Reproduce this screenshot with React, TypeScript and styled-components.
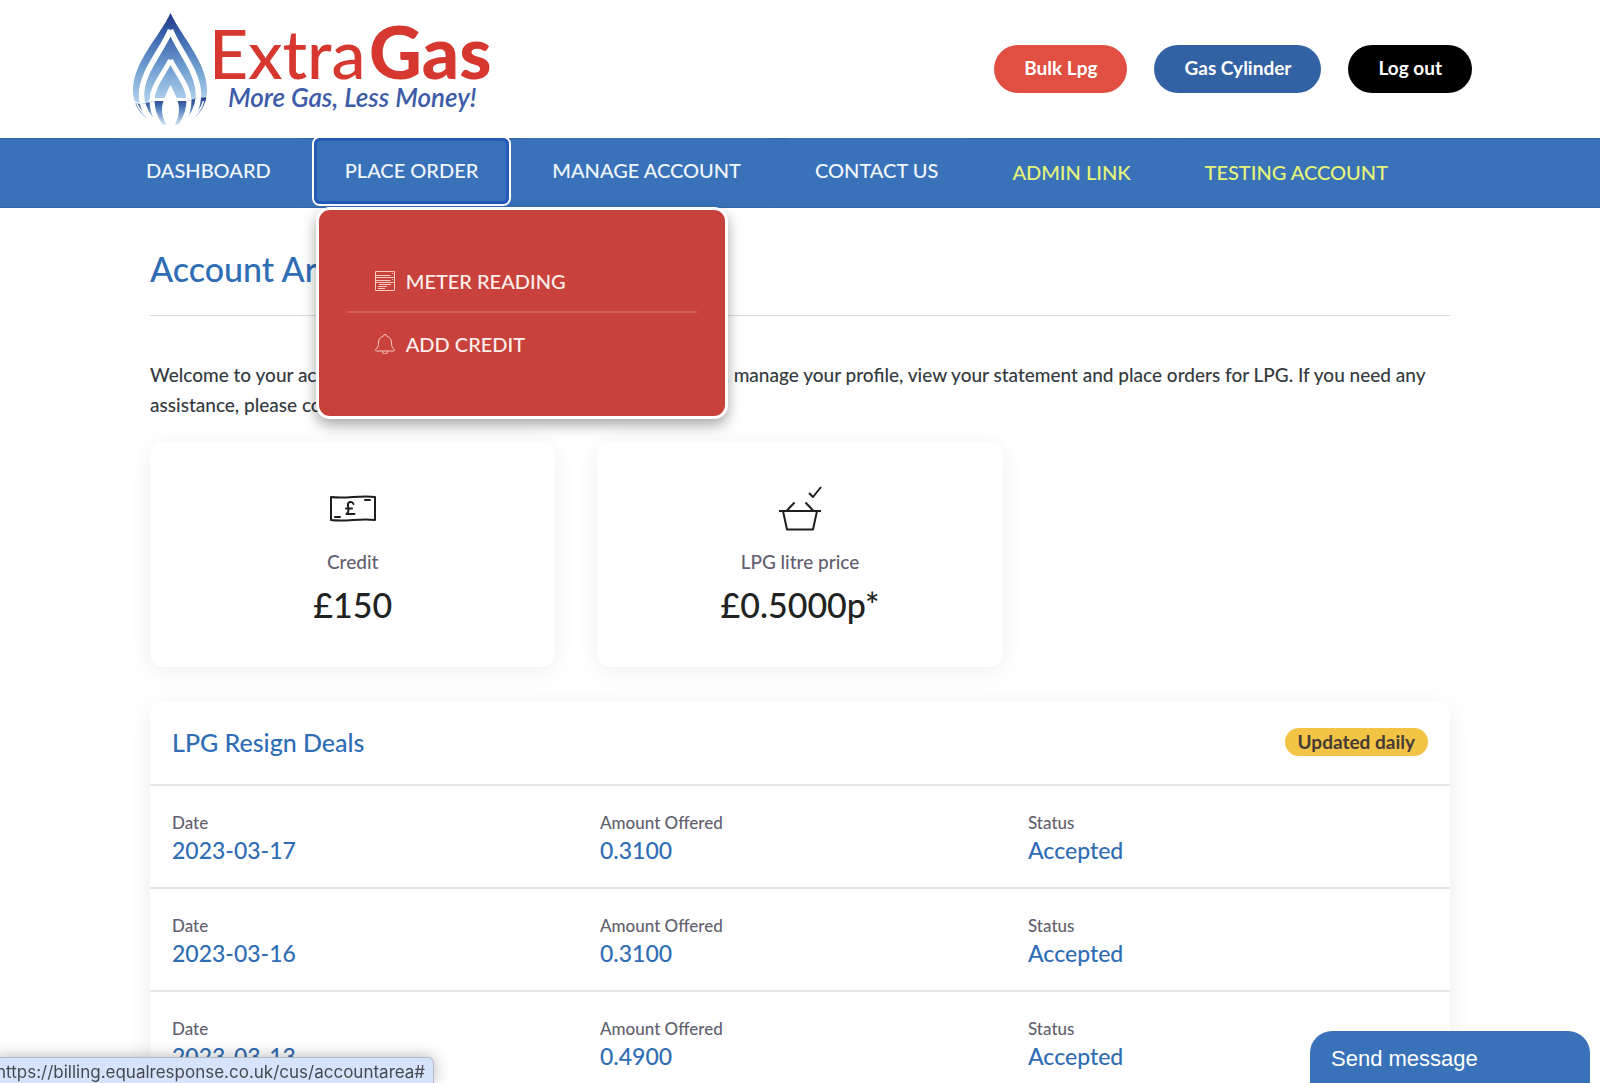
import React from "react";
import styled, { createGlobalStyle } from "styled-components";

const BLUE = "#3972b9";

const GlobalStyle = createGlobalStyle`
  *, *::before, *::after { box-sizing: border-box; }
  body {
    margin: 0;
    background: #fff;
    color: #343a40;
    font-family: Lato, "Open Sans", sans-serif;
    font-size: 19px;
    font-weight: 500;
    line-height: 30px;
  }
  h1, h2, p, ul { margin: 0; padding: 0; }
  ul { list-style: none; }
  a { color: inherit; text-decoration: none; }
  button { font: inherit; border: 0; cursor: pointer; }
`;

const Page = styled.div`
  height: 100vh;
  overflow: hidden;
`;

const Wide = styled.div`
  max-width: 1376px;
  margin: 0 auto;
  padding: 0 16px;
`;

const Header = styled(Wide).attrs({ as: "header" })`
  display: flex;
  justify-content: space-between;
  align-items: center;
  height: 138px;
`;

const HeaderLinks = styled.div`
  display: flex;
  gap: 27px;
`;

const Pill = styled.a<{ $bg: string }>`
  padding: 0 30px 2px;
  border-radius: 24px;
  background: ${(p) => p.$bg};
  color: #fff;
  font-weight: 700;
  line-height: 46px;
`;

const Nav = styled.nav`
  background: ${BLUE};
  border-top: 1px solid #3465a6;
  border-bottom: 1px solid #3465a6;
`;

const NavList = styled.ul`
  display: flex;
  align-items: center;
  gap: 12px;
  height: 68px;
  margin-left: -13px;
`;

const NavItem = styled.li<{ $main?: boolean }>`
  position: relative;
  margin-bottom: ${(p) => (p.$main ? "4px" : "0")};
`;

const NavLink = styled.button<{ $accent?: boolean; $open?: boolean }>`
  display: block;
  height: 66px;
  padding: 0 31px 2px;
  border-radius: 6px;
  background: ${BLUE};
  color: ${(p) => (p.$accent ? "#e6f47a" : "#f1f6fc")};
  font-size: 20px;
  white-space: nowrap;
  box-shadow: ${(p) => (p.$open ? "inset 0 0 0 3px #2459bd, 0 0 0 2px #fff" : "none")};
`;

const Menu = styled.ul`
  position: absolute;
  z-index: 5;
  top: 69px;
  left: 2px;
  width: 412px;
  padding: 40px 28px 42px;
  border: 3px solid #fff;
  border-radius: 14px;
  background: #c8423b;
  box-shadow: 0 6px 14px rgba(0, 0, 0, 0.35);
`;

const MenuItem = styled.li`
  & + & { border-top: 2px solid #d45e57; }
`;

const MenuLink = styled.a`
  display: flex;
  align-items: center;
  gap: 11px;
  height: 61px;
  padding: 0 28px;
  color: #fdeeee;
  font-size: 20px;
`;

const Main = styled.main`
  max-width: 1332px;
  margin: 0 auto;
  padding: 0 16px;
`;

const PageTitle = styled.h1`
  padding: 37px 0 22px;
  border-bottom: 1px solid #d9d9d9;
  color: #2f6db5;
  font-size: 34px;
  font-weight: 500;
  line-height: 48px;
`;

const Intro = styled.p`
  margin: 44px 0 22px;
`;

const Cards = styled.section`
  display: grid;
  grid-template-columns: repeat(3, 1fr);
  gap: 42px;
`;

const Surface = styled.div`
  border-radius: 14px;
  background: #fff;
  box-shadow: 0 4px 24px rgba(0, 0, 0, 0.07);
`;

const Card = styled(Surface)`
  display: flex;
  flex-direction: column;
  align-items: center;
  height: 225px;
  padding-top: 42px;
`;

const CardLabel = styled.p`
  margin-top: 11px;
  color: #625f6e;
`;

const CardValue = styled.p`
  color: #212322;
  font-size: 34px;
  line-height: 56px;
`;

const Deals = styled(Surface)`
  margin-top: 34px;
`;

const DealsHeader = styled.div`
  display: flex;
  justify-content: space-between;
  align-items: center;
  height: 83px;
  padding: 0 22px 2px;
`;

const DealsTitle = styled.h2`
  color: #2f6db5;
  font-size: 25px;
  font-weight: 500;
`;

const Badge = styled.span`
  padding: 0 13px;
  border-radius: 14px;
  background: #f3c345;
  color: #443b35;
  font-weight: 700;
  line-height: 28px;
`;

const DealsTable = styled.table`
  display: block;
  tbody { display: block; }
`;

const Deal = styled.tr`
  display: grid;
  grid-template-columns: repeat(3, 1fr);
  gap: 28px;
  padding: 24px 22px 22px;
  border-top: 2px solid #e4e5e5;
`;

const Cell = styled.td`
  padding: 0;
`;

const CellLabel = styled.div`
  color: #625f6e;
  font-size: 17px;
  line-height: 25px;
`;

const CellValue = styled.div`
  color: #2f6db5;
  font-size: 23px;
`;

const ChatButton = styled.button`
  position: fixed;
  right: 10px;
  bottom: 0;
  width: 280px;
  height: 52px;
  padding: 4px 21px 0;
  border-radius: 22px 22px 0 0;
  background: ${BLUE};
  color: #fff;
  font-family: "Liberation Sans", Arial, sans-serif;
  font-size: 22px;
  text-align: left;
`;

const StatusBar = styled.div`
  position: fixed;
  left: -4px;
  bottom: 0;
  padding: 3px 8px 0 0;
  border: 1px solid #b4b9c6;
  border-width: 1px 1px 0 0;
  border-radius: 0 6px 0 0;
  background: #d7e2fb;
  box-shadow: 0 0 16px rgba(0, 0, 0, 0.3);
  color: #454a50;
  font-family: Inter, sans-serif;
  font-size: 17px;
  font-weight: 400;
  line-height: 22px;
`;

const LogoArt = styled.svg`
  display: block;
`;

const Logo = () => (
  <LogoArt width="364" height="124" viewBox="128 7 364 124" role="img" aria-label="ExtraGas">
    <defs>
      <linearGradient id="flame" gradientUnits="userSpaceOnUse" x1="0" y1="13" x2="0" y2="103">
        <stop offset="0" stopColor="#1d3585" />
        <stop offset="0.25" stopColor="#3a63ad" />
        <stop offset="0.6" stopColor="#6e9dd0" />
        <stop offset="1" stopColor="#b4d3ef" />
      </linearGradient>
      <linearGradient id="base" gradientUnits="userSpaceOnUse" x1="0" y1="98" x2="0" y2="125">
        <stop offset="0" stopColor="#233c85" />
        <stop offset="0.4" stopColor="#5480bd" />
        <stop offset="1" stopColor="#cfe2f4" />
      </linearGradient>
      <clipPath id="upper"><path d="M128 6H212V98Q206 103 196 104Q192 100 187 98H154Q149 100 146 104Q137 103 128 99Z" /></clipPath>
      <clipPath id="lower"><path d="M128 103L142 104L154 101H187L198 98L212 97V130H128Z" /></clipPath>
      <g id="drop">
        <path d="M170.500 13C181 36 207 62 207 90C207 112 191 123 177 124.500H164C148 123 133 111 133 90C133 62 160 36 170.500 13Z" />
        <g fill="none" stroke="#fff">
          <path d="M170.500 30C179 51 198.500 72 198.500 95Q198 113 184 125M170.500 30C162 51 141.500 72 141.500 95Q142 113 157 125" strokeWidth="5.500" />
          <path d="M170.500 60C178 75 188.500 86 189 100Q189 114 181 125M170.500 60C163 75 152.500 86 152 100Q152 114 160 125" strokeWidth="5" />
          <path d="M203.500 101Q201 113 186 123M137 104Q140 113 155 123" strokeWidth="1.500" />
        </g>
        <path d="M170.500 85Q162 101 162 109Q162 118 167 126H174Q179 118 179 109Q179 101 170.500 85Z" fill="#fff" />
      </g>
    </defs>
    <g clipPath="url(#upper)" fill="url(#flame)"><use href="#drop" /></g>
    <g clipPath="url(#lower)" fill="url(#base)"><use href="#drop" /></g>
    <g fill="#d6372f" fontFamily="Lato, sans-serif">
      <text x="209" y="79" fontSize="68">Extra</text>
      <text x="369" y="79" fontSize="73" fontWeight="900">Gas</text>
    </g>
    <text x="228" y="107" fill="#3c5ca9" fontFamily="Lato, sans-serif" fontSize="26" fontStyle="italic" fontWeight="600">
      More Gas, Less Money!
    </text>
  </LogoArt>
);

const MeterIcon = () => (
  <svg width="20" height="20" viewBox="0 0 20 20" fill="none" stroke="#f7c9c3" aria-hidden="true">
    <path d="M.5.5h19v19H.5zM.5 4.500h15M17 2.500h1M.5 6.500h19M.5 9.500h15M17 8.500h1M.5 11.500h19M4 13.500h12M3 15.500h9M3 17.500h7" />
  </svg>
);

const BellIcon = () => (
  <svg width="20" height="20" viewBox="0 0 20 20" fill="none" stroke="#f7c9c3" aria-hidden="true">
    <path d="M8.500 2a1.500 1.500 0 0 1 3 0C15 3 16.500 5.500 16.500 9c0 3.500.8 4.800 2.500 6 1 .9.500 2-.5 2h-17c-1 0-1.500-1.100-.5-2 1.700-1.200 2.500-2.500 2.500-6C3.500 5.500 5 3 8.500 2ZM7.500 17.500a2.500 2.500 0 0 0 5 0" />
  </svg>
);

const NoteIcon = () => (
  <svg width="48" height="52" viewBox="0 0 48 52" fill="none" stroke="#1d1e1e" strokeWidth="2" strokeLinejoin="round" strokeLinecap="round" aria-hidden="true">
    <path d="M2 13c15 2 29-2 44 0v23c-15-2-29 2-44 0ZM36 16h5M6 33h5" />
    <path d="M24.500 20q-1-2.500-3.500-2-2.500.500-2 4l.500 4q0 2.500-2 4h8M17 24.500h6" />
  </svg>
);

const BasketIcon = () => (
  <svg width="48" height="52" viewBox="0 0 48 52" fill="none" stroke="#1d1e1e" strokeWidth="2" strokeLinejoin="round" aria-hidden="true">
    <path d="M3 27h42M7 27l4 18.500h26L41 27M10.500 27l8-8.500M37.500 27l-8-8.500M33 9l4 4 8-10" />
  </svg>
);

const deals = [
  { date: "2023-03-17", amount: "0.3100", status: "Accepted" },
  { date: "2023-03-16", amount: "0.3100", status: "Accepted" },
  { date: "2023-03-13", amount: "0.4900", status: "Accepted" },
];

const DealCell = ({ label, value }: { label: string; value: string }) => (
  <Cell>
    <CellLabel>{label}</CellLabel>
    <CellValue>{value}</CellValue>
  </Cell>
);

export default function App() {
  return (
    <Page>
      <GlobalStyle />
      <Header>
        <a href="#"><Logo /></a>
        <HeaderLinks>
          <Pill href="#" $bg="#e04f41">Bulk Lpg</Pill>
          <Pill href="#" $bg="#3262a4">Gas Cylinder</Pill>
          <Pill href="#" $bg="#000">Log out</Pill>
        </HeaderLinks>
      </Header>
      <Nav>
        <Wide>
          <NavList>
            <NavItem $main><NavLink>DASHBOARD</NavLink></NavItem>
            <NavItem $main>
              <NavLink $open aria-expanded="true">PLACE ORDER</NavLink>
              <Menu>
                <MenuItem><MenuLink href="#"><MeterIcon />METER READING</MenuLink></MenuItem>
                <MenuItem><MenuLink href="#"><BellIcon />ADD CREDIT</MenuLink></MenuItem>
              </Menu>
            </NavItem>
            <NavItem $main><NavLink>MANAGE ACCOUNT</NavLink></NavItem>
            <NavItem $main><NavLink>CONTACT US</NavLink></NavItem>
            <NavItem><NavLink $accent>ADMIN LINK</NavLink></NavItem>
            <NavItem><NavLink $accent>TESTING ACCOUNT</NavLink></NavItem>
          </NavList>
        </Wide>
      </Nav>
      <Main>
        <PageTitle>Account Area</PageTitle>
        <Intro>
          Welcome to your account area. From here you can view your account, manage your profile,
          view your statement and place orders for LPG. If you need any assistance, please contact us.
        </Intro>
        <Cards>
          <Card>
            <NoteIcon />
            <CardLabel>Credit</CardLabel>
            <CardValue>£150</CardValue>
          </Card>
          <Card>
            <BasketIcon />
            <CardLabel>LPG litre price</CardLabel>
            <CardValue>£0.5000p*</CardValue>
          </Card>
        </Cards>
        <Deals>
          <DealsHeader>
            <DealsTitle>LPG Resign Deals</DealsTitle>
            <Badge>Updated daily</Badge>
          </DealsHeader>
          <DealsTable>
            <tbody>
              {deals.map((deal) => (
                <Deal key={deal.date}>
                  <DealCell label="Date" value={deal.date} />
                  <DealCell label="Amount Offered" value={deal.amount} />
                  <DealCell label="Status" value={deal.status} />
                </Deal>
              ))}
            </tbody>
          </DealsTable>
        </Deals>
      </Main>
      <StatusBar>https://billing.equalresponse.co.uk/cus/accountarea#</StatusBar>
      <ChatButton>Send message</ChatButton>
    </Page>
  );
}
